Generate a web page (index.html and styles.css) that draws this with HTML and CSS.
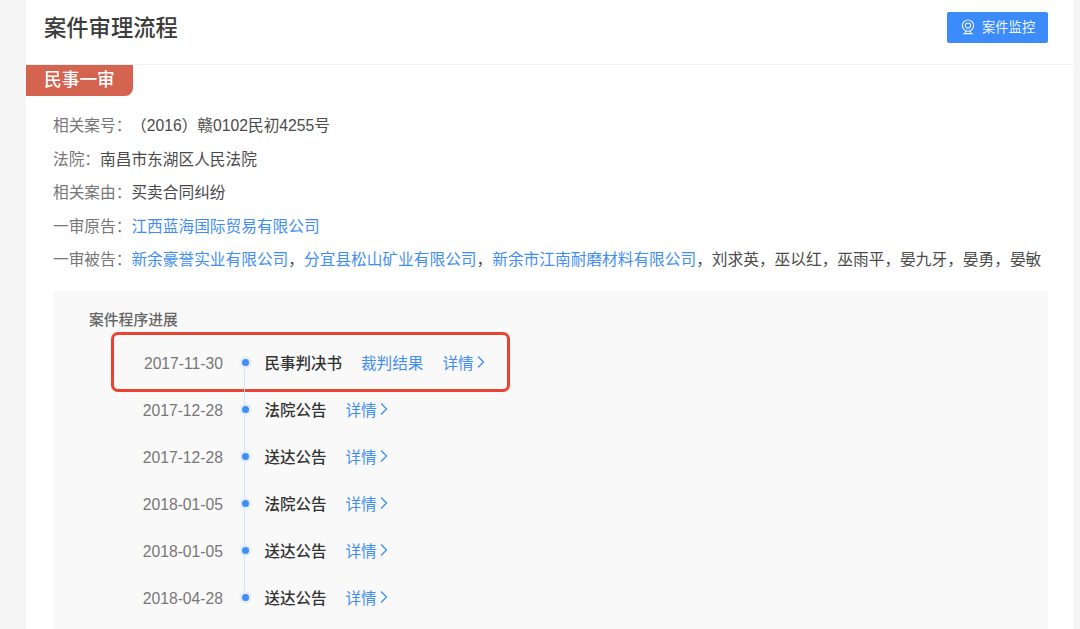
FILE: index.html
```html
<!DOCTYPE html>
<html lang="zh-CN">
<head>
<meta charset="utf-8">
<title>案件审理流程</title>
<link rel="stylesheet" href="styles.css">
</head>
<body>
<main class="card">
  <header class="head">
    <h1 class="head-title">案件审理流程</h1>
    <button class="monitor" type="button">
      <svg class="monitor-icon" viewBox="0 0 16 16" width="16" height="16" fill="none" stroke="currentColor" stroke-width="1.1">
        <circle cx="8" cy="6.6" r="5.6"/>
        <circle cx="8" cy="6.6" r="2.6"/>
        <path d="M5.6 12v1.6M10.4 12v1.6M3.4 14.6h9.2" stroke-linecap="round"/>
      </svg>
      <span>案件监控</span>
    </button>
  </header>
  <div class="tag">民事一审</div>
  <section class="info">
    <p class="info-row"><span class="label">相关案号：</span><span class="value case-no">（2016）赣0102民初4255号</span></p>
    <p class="info-row"><span class="label">法院：</span><span class="value">南昌市东湖区人民法院</span></p>
    <p class="info-row"><span class="label">相关案由：</span><span class="value">买卖合同纠纷</span></p>
    <p class="info-row"><span class="label">一审原告：</span><a class="link">江西蓝海国际贸易有限公司</a></p>
    <p class="info-row"><span class="label">一审被告：</span><a class="link">新余豪誉实业有限公司</a><span class="value">，</span><a class="link">分宜县松山矿业有限公司</a><span class="value">，</span><a class="link">新余市江南耐磨材料有限公司</a><span class="value">，刘求英，巫以红，巫雨平，晏九牙，晏勇，晏敏</span></p>
  </section>
  <section class="panel">
    <h2 class="panel-title">案件程序进展</h2>
    <div class="highlight"></div>
    <ol class="timeline">
      <li class="step step-first">
        <span class="date">2017-11-30</span><i class="dot"></i><strong class="name">民事判决书</strong>
        <a class="link result">裁判结果</a>
        <a class="link more">详情<svg class="chev" viewBox="0 0 9 14" width="9" height="14" fill="none" stroke="currentColor" stroke-width="1.3"><path d="M2 1.5 7.5 7 2 12.5"/></svg></a>
      </li>
      <li class="step">
        <span class="date">2017-12-28</span><i class="dot"></i><strong class="name">法院公告</strong>
        <a class="link more">详情<svg class="chev" viewBox="0 0 9 14" width="9" height="14" fill="none" stroke="currentColor" stroke-width="1.3"><path d="M2 1.5 7.5 7 2 12.5"/></svg></a>
      </li>
      <li class="step">
        <span class="date">2017-12-28</span><i class="dot"></i><strong class="name">送达公告</strong>
        <a class="link more">详情<svg class="chev" viewBox="0 0 9 14" width="9" height="14" fill="none" stroke="currentColor" stroke-width="1.3"><path d="M2 1.5 7.5 7 2 12.5"/></svg></a>
      </li>
      <li class="step">
        <span class="date">2018-01-05</span><i class="dot"></i><strong class="name">法院公告</strong>
        <a class="link more">详情<svg class="chev" viewBox="0 0 9 14" width="9" height="14" fill="none" stroke="currentColor" stroke-width="1.3"><path d="M2 1.5 7.5 7 2 12.5"/></svg></a>
      </li>
      <li class="step">
        <span class="date">2018-01-05</span><i class="dot"></i><strong class="name">送达公告</strong>
        <a class="link more">详情<svg class="chev" viewBox="0 0 9 14" width="9" height="14" fill="none" stroke="currentColor" stroke-width="1.3"><path d="M2 1.5 7.5 7 2 12.5"/></svg></a>
      </li>
      <li class="step">
        <span class="date">2018-04-28</span><i class="dot"></i><strong class="name">送达公告</strong>
        <a class="link more">详情<svg class="chev" viewBox="0 0 9 14" width="9" height="14" fill="none" stroke="currentColor" stroke-width="1.3"><path d="M2 1.5 7.5 7 2 12.5"/></svg></a>
      </li>
    </ol>
  </section>
</main>
</body>
</html>
```
FILE: styles.css
```css
* { box-sizing: border-box; }
html, body { height: 100%; }
body {
  margin: 0;
  height: 629px;
  overflow: hidden;
  padding: 0 6px 0 26px;
  background: #f5f5f5;
  font-family: "Liberation Sans", "Noto Sans CJK SC", sans-serif;
  font-size: 15.7px;
  color: #444;
}
.card {
  height: 629px;
  background: #fff;
  overflow: hidden;
}
.head {
  height: 65px;
  border-bottom: 1px solid #f0f0f0;
  display: flex;
  align-items: center;
  justify-content: space-between;
  padding: 0 26px 9px 18px;
}
.head-title {
  margin: 0 0 4px;
  font-size: 22.3px;
  font-weight: 500;
  line-height: 30px;
  color: #3b3b3b;
  font-family: "Noto Sans CJK SC", sans-serif;
}
.monitor {
  width: 101px;
  height: 31px;
  border: 0;
  border-radius: 2px;
  background: #3b8bfb;
  color: #eef5ff;
  display: flex;
  align-items: center;
  gap: 6px;
  padding: 0 0 2px 13px;
  font-family: "Noto Sans CJK SC", sans-serif;
  font-size: 13.3px;
}
.monitor-icon { flex: none; }
.tag {
  width: 107px;
  height: 31px;
  background: #d46350;
  border-radius: 0 0 8px 0;
  color: #fff;
  font-size: 17.7px;
  font-weight: 500;
  line-height: 27px;
  padding-left: 18px;
  font-family: "Noto Sans CJK SC", sans-serif;
}
.info {
  margin-top: 13px;
  padding-left: 27px;
}
.info-row {
  margin: 0;
  height: 33.5px;
  line-height: 33.5px;
  white-space: nowrap;
}
.label { color: #777; }
.value { color: #4a4a4a; }
.case-no { padding-left: 7.5px; }
.link { color: #3f8ef5; }
.panel {
  position: relative;
  margin: 14px 26px 0 27px;
  height: 400px;
  padding-top: 18px;
  background: #f9f9f9;
}
.panel-title {
  margin: 0 0 10.5px 36px;
  font-size: 14.8px;
  line-height: 20px;
  font-weight: 500;
  color: #666;
  font-family: "Noto Sans CJK SC", sans-serif;
}
.highlight {
  position: absolute;
  left: 58px;
  top: 41px;
  width: 399px;
  height: 60px;
  border: 3px solid #ea4230;
  border-radius: 7px;
}
.timeline {
  position: relative;
  margin: 0;
  padding: 0;
  list-style: none;
}
.timeline::before {
  content: "";
  position: absolute;
  left: 191px;
  top: 23px;
  width: 1px;
  height: 235px;
  background: #cfe3fd;
}
.step {
  height: 47px;
  display: flex;
  align-items: center;
  white-space: nowrap;
}
.date {
  width: 170px;
  padding-top: 2px;
  text-align: right;
  color: #777;
  font-size: 15.7px;
}
.dot {
  position: relative;
  flex: none;
  width: 7px;
  height: 7px;
  margin: 0 16px 0 18.5px;
  border-radius: 50%;
  background: #3f8ef5;
  box-shadow: 0 0 0 2.5px #e3eefd;
}
.name {
  padding-bottom: 2px;
  font-family: "Noto Sans CJK SC", sans-serif;
  font-weight: 500;
  font-size: 15.5px;
  color: #333;
}
.result { margin-left: 19px; padding-bottom: 2px; font-size: 15.6px; }
.more {
  display: inline-flex;
  align-items: center;
  gap: 2px;
  margin-left: 19px;
  padding-bottom: 2px;
  font-size: 15.6px;
}
.chev { flex: none; }
```
